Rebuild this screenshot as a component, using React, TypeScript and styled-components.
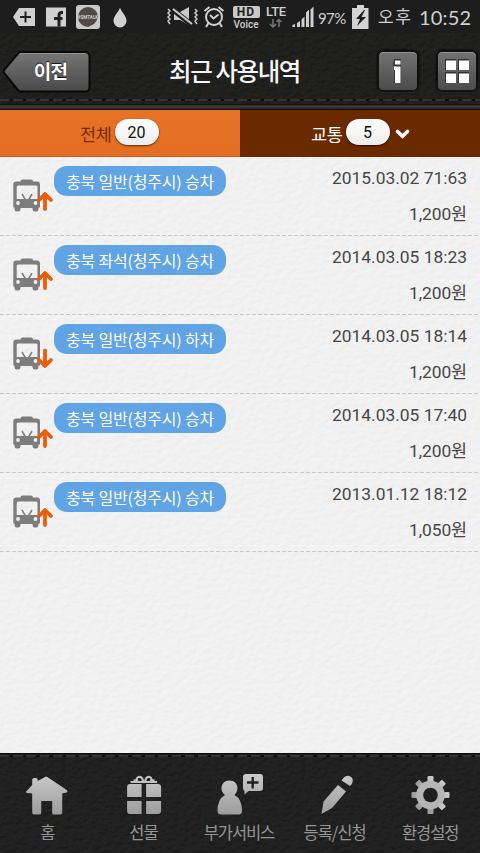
import React from "react";
import styled, { createGlobalStyle } from "styled-components";

const leather = (light: string, freq: string, scale: number, opacity: number) =>
  `url("data:image/svg+xml,${encodeURIComponent(
    `<svg xmlns='http://www.w3.org/2000/svg' width='240' height='240'><filter id='n' x='0' y='0' width='100%' height='100%'><feTurbulence type='fractalNoise' baseFrequency='${freq}' numOctaves='2' seed='4' stitchTiles='stitch'/><feDiffuseLighting lighting-color='${light}' surfaceScale='${scale}' diffuseConstant='1'><feDistantLight azimuth='60' elevation='55'/></feDiffuseLighting></filter><rect width='240' height='240' filter='url(#n)' opacity='${opacity}'/></svg>`
  )}")`;

const darkLeather = leather("#262626", "0.17 0.24", 1.8, 0.6);
const paleLeather = leather("#ffffff", "0.15 0.2", 0.9, 0.2);

const sans = `"Noto Sans CJK KR", sans-serif`;

const Global = createGlobalStyle`
  * { box-sizing: border-box; }
  body { margin: 0; background: #1b1b1b; }
`;

const Screen = styled.div`
  width: 480px;
  height: 853px;
  display: flex;
  flex-direction: column;
  overflow: hidden;
  font-family: Roboto, ${sans};
`;

const StatusBar = styled.div`
  height: 33px;
  flex: none;
  display: flex;
  background: #1d1d1d;
  color: #d0d0d0;
`;

const StatusItem = styled.div<{ $w: number; $gap: number }>`
  width: ${(p) => p.$w}px;
  margin-left: ${(p) => p.$gap}px;
  height: 33px;
  flex: none;
  white-space: nowrap;
  svg { display: block; }
`;

const StatusText = styled.span<{ $size: number; $spacing: number; $top: number }>`
  display: block;
  padding-top: ${(p) => p.$top}px;
  font-family: Lato, ${sans};
  font-size: ${(p) => p.$size}px;
  letter-spacing: ${(p) => p.$spacing}px;
  line-height: 24px;
`;

const Network = styled.div`
  display: flex;
  flex-direction: column;
  align-items: center;
  padding-top: 6px;
`;

const HdBadge = styled.div`
  width: 27px;
  height: 12px;
  background: #c9c9c9;
  border-radius: 2px;
  color: #1d1d1d;
  font: 700 12px/12px Roboto, sans-serif;
  letter-spacing: 1px;
  text-align: center;
`;

const VoiceLabel = styled.div`
  margin-top: 1px;
  font: 500 10px/11px Roboto, sans-serif;
  color: #d0d0d0;
`;

const LteLabel = styled.div`
  font: 500 13px/11px Roboto, sans-serif;
  letter-spacing: -0.3px;
`;

const Header = styled.header`
  height: 77px;
  flex: none;
  display: flex;
  flex-direction: column;
  background: ${darkLeather}, #1b1b1a;
`;

const HeaderRow = styled.div`
  height: 65px;
  padding: 18px 3px 0 3px;
  display: grid;
  grid-template-columns: 88px 1fr 40px 40px;
  column-gap: 19px;
`;

const BackButton = styled.button`
  display: grid;
  width: 88px;
  height: 42px;
  padding: 0;
  border: 0;
  background: none;
  > * { grid-area: 1 / 1; }
`;

const BackLabel = styled.span`
  padding-left: 7px;
  align-self: center;
  color: #fff;
  font: 700 19px/40px ${sans};
  letter-spacing: -0.8px;
  padding-bottom: 2px;
  text-shadow: 0 -1px 1px #111;
`;

const Title = styled.h1`
  margin: 0;
  justify-self: center;
  color: #f5f5f5;
  white-space: nowrap;
  font: 500 24.5px/39px ${sans};
  letter-spacing: -1.4px;
`;

const SquareButton = styled.button`
  width: 40px;
  height: 40px;
  padding: 0;
  border: 1px solid #111;
  border-radius: 5px;
  background: linear-gradient(#737373, #4b4b4b);
  box-shadow: inset 0 1px 0 #929292, 0 0 2px 1px #090909, 0 2px 0 #333;
  svg { display: block; }
`;

const Stitch = styled.div`
  height: 6px;
  background: repeating-linear-gradient(100deg, #333332 0 9px, #0e0e0e 10px 13px) 0 1px / 100% 2px no-repeat;
`;

const Seam = styled.div`
  height: 6px;
  border-top: 1px solid #121211;
  border-bottom: 1px solid #11110f;
  background: linear-gradient(#2b2b2a, #3a3a39, #262625);
`;

const Tabs = styled.nav`
  height: 47px;
  flex: none;
  display: grid;
  grid-template-columns: 1fr 1fr;
`;

const Tab = styled.div<{ $active?: boolean }>`
  display: flex;
  padding: 9px 0 0 ${(p) => (p.$active ? 80 : 71)}px;
  background: ${(p) => (p.$active ? "linear-gradient(#e77326, #e56d22)" : "#6b2900")};
  border-bottom: 1px solid ${(p) => (p.$active ? "#c85f1c" : "#6b2900")};
  color: ${(p) => (p.$active ? "#762c00" : "#fff")};
`;

const TabLabel = styled.span`
  width: 34.500px;
  padding-top: 1px;
  font: 400 17.500px/27px ${sans};
  letter-spacing: -0.4px;
  white-space: nowrap;
`;

const Count = styled.span`
  width: 44px;
  height: 26px;
  border-radius: 13px;
  background: linear-gradient(#fff, #ededed);
  box-shadow: 0 1px 2px rgba(0, 0, 0, 0.65);
  color: #111;
  font: 400 16px/27.500px Roboto, sans-serif;
  text-align: center;
`;

const List = styled.main`
  flex: 1;
  background: ${paleLeather}, #f3f3f3;
`;

const Row = styled.article`
  height: 79.1px;
  display: grid;
  grid-template-columns: 54px 1fr auto;
  background: repeating-linear-gradient(90deg, #c8c8c8 0 4px, transparent 4px 6px) 0 100% / 100% 1px no-repeat;
`;

const BusCell = styled.div`
  padding: 20px 0 0 10px;
  svg { display: block; }
`;

const Place = styled.div`
  justify-self: start;
  width: 172px;
  height: 30px;
  margin-top: 9px;
  border-radius: 13px;
  background: #61a4e5;
  color: #fff;
  font: 400 16px/30px ${sans};
  letter-spacing: -0.2px;
  text-align: center;
  white-space: nowrap;
`;

const Details = styled.div`
  padding: 3px 13px 0 0;
  color: #464646;
  font-size: 17.400px;
  line-height: 36px;
  text-align: right;
  white-space: nowrap;
`;

const DateText = styled.div``;

const Amount = styled.div`
  letter-spacing: -0.1px;
`;

const Footer = styled.footer`
  height: 100px;
  flex: none;
  background: ${darkLeather}, #1d1d1d;
`;

const FooterStitch = styled(Stitch)`
  height: 5px;
  border-top: 1px solid #0c0c0c;
`;

const FooterGrid = styled.div`
  display: grid;
  grid-template-columns: repeat(5, 95.6px);
`;

const FooterItem = styled.div`
  display: flex;
  flex-direction: column;
  align-items: center;
  padding-top: 10px;
  svg { display: block; }
`;

const FooterLabel = styled.span<{ $spacing: number }>`
  color: #969696;
  font: 400 16.500px/24px ${sans};
  letter-spacing: ${(p) => p.$spacing}px;
  white-space: nowrap;
`;

const Bus = ({ down }: { down?: boolean }) => (
  <svg width="44" height="38" viewBox="10 177 44 38">
    <path fill="#7d7d7d" fillRule="evenodd" d="M20.500 181.500q0-2 2-2h8.500q2 0 2 2h4q3 0 3 3v23h-1.500v1.500q0 2.500-2.300 2.500h-1.400q-2.300 0-2.300-2.500v-1h-12v1q0 2.500-2.300 2.500h-1.400q-2.300 0-2.300-2.500v-1.500h-1.200v-23q0-3 3-3zM16.700 187v12h20.800v-12q0-1.500-1.500-1.500H18.200q-1.500 0-1.500 1.500z" />
    <path d="m22 194 3.500 6m6.500-6-3.500 6" stroke="#7d7d7d" strokeWidth="1.500" />
    <circle cx="18" cy="203" r="1.900" fill="#eee" />
    <circle cx="35.500" cy="203" r="1.900" fill="#eee" />
    <path
      d={down ? "M45 192.500v15m-6-5.500 6 6 6-6" : "M45 209v-14.500m-6 5.500 6-6 6 6"}
      fill="none"
      stroke="#ed5b06"
      strokeWidth="3.800"
      strokeLinecap="round"
      strokeLinejoin="round"
    />
  </svg>
);

const rows = [
  { place: "충북 일반(청주시) 승차", date: "2015.03.02 71:63", amount: "1,200원" },
  { place: "충북 좌석(청주시) 승차", date: "2014.03.05 18:23", amount: "1,200원" },
  { place: "충북 일반(청주시) 하차", date: "2014.03.05 18:14", amount: "1,200원", down: true },
  { place: "충북 일반(청주시) 승차", date: "2014.03.05 17:40", amount: "1,200원" },
  { place: "충북 일반(청주시) 승차", date: "2013.01.12 18:12", amount: "1,050원" },
];

const FooterIcon = ({ x, children }: { x: number; children: React.ReactNode }) => (
  <svg width="60" height="52" viewBox={`${x} 768 60 52`} fill="url(#silver)">
    <defs>
      <linearGradient id="silver" gradientUnits="userSpaceOnUse" x1="0" y1="774" x2="0" y2="815">
        <stop stopColor="#cacaca" />
        <stop offset="1" stopColor="#9b9b9b" />
      </linearGradient>
    </defs>
    {children}
  </svg>
);

const footerItems = [
  {
    label: "홈",
    spacing: 0,
    x: 17.8,
    icon: <path d="M32 785v-5q0-2 2-2h1.500q2 0 2 2v1l7.800-4.300q.9-.4 1.800.2L66.500 790q1.500 1.500 0 2.500l-4.500 1v19q0 2-2 2h-6.500q-1.500 0-1.500-1.500V801H41v12q0 1.500-1.500 1.500H34q-2 0-2-2v-19l-5-.5q-2.500-1 0-2.500z" />,
  },
  {
    label: "선물",
    spacing: -1,
    x: 113.4,
    icon: (
      <>
        <path d="M127.500 787q0-3 3-3H142v13h-14.500zM146.500 784H158q3.500 0 3.500 3v10h-15zM127.500 801H142v13h-11.500q-3 0-3-3zM146.500 801h15v10q0 3-3.500 3h-11.500z" />
        <path d="M131 782h26.500M134 780.500l4-.5M155 780.500l-4-.5" fill="none" stroke="#c2c2c2" strokeWidth="2" />
        <path d="M143.500 782c0-4-2.500-5.500-4.500-5s-2.500 3-1 4.500M145.500 782c0-4 2.500-5.500 4.500-5s2.500 3 1 4.500" fill="none" stroke="#c2c2c2" strokeWidth="2.200" />
      </>
    ),
  },
  {
    label: "부가서비스",
    spacing: -1.1,
    x: 209,
    icon: (
      <>
        <path d="M229.500 780.500c5 0 8 3.500 8 8q0 3.500-3 6.500 7.500 4 7.500 16 0 3.500-3.500 3.500h-17q-4 0-4-3.500 0-12 7.500-16-3.500-3-3.500-6.500c0-4.500 3-8 8-8z" />
        <path d="M246 774h14q3 0 3 3v11q0 3-3 3h-11.500l-4 3.500v-3.500q-1.500-.5-1.500-3v-11q0-3 3-3z" />
        <path d="M247 782.500h11.500M252.700 777v11.500" stroke="#1f1f1f" strokeWidth="2.400" />
      </>
    ),
  },
  {
    label: "등록/신청",
    spacing: -1,
    x: 304.5,
    icon: <path d="M321 814l2-12.500L337.500 785l8 6.500-14 16.500zM342.500 778.500c3-4 6-3 8-1.500s2.500 4 .5 7.500l-1.500 1.500-8.500-5.500z" />,
  },
  {
    label: "환경설정",
    spacing: -1.1,
    x: 400.5,
    icon: (
      <>
        {[0, 45, 90, 135].map((a) => (
          <rect key={a} x="428" y="776" width="6" height="38" rx="1" transform={`rotate(${a} 431 795)`} />
        ))}
        <circle cx="431" cy="795" r="10.800" fill="none" stroke="#b5b5b5" strokeWidth="7" />
        <circle cx="431" cy="795" r="7.300" fill="#202020" />
      </>
    ),
  },
];

export default function App() {
  return (
    <Screen>
      <Global />
      <StatusBar>
        <StatusItem $w={22} $gap={13}>
          <svg width="22" height="33" viewBox="13 0 22 33">
            <path fill="#d0d0d0" d="m13 17 6-9h16v18H19z" />
            <path d="M20 17h11M25.500 11.500v11" stroke="#202020" strokeWidth="2" />
          </svg>
        </StatusItem>
        <StatusItem $w={20} $gap={11}>
          <svg width="20" height="33" viewBox="46 0 20 33">
            <path fill="#d0d0d0" d="M46 7.500h20v19H46z" />
            <path d="M63 12.500h-1.500q-2.500 0-2.500 3v11m-5-8h8.500" fill="none" stroke="#202020" strokeWidth="3" />
          </svg>
        </StatusItem>
        <StatusItem $w={24} $gap={10}>
          <svg width="24" height="33" viewBox="76 0 24 33">
            <rect x="76" y="5" width="24" height="24" rx="3" fill="#c9c9c9" />
            <path d="M98 17a10 10 0 1 0-10 10l6-3q3-3 4-7z" fill="#514948" />
            <text x="88" y="18.500" textAnchor="middle" fill="#ccc" fontFamily="Roboto" fontSize="4.600" fontWeight="700">#SMTALK</text>
          </svg>
        </StatusItem>
        <StatusItem $w={14} $gap={13}>
          <svg width="14" height="33" viewBox="113 0 14 33">
            <path fill="#d0d0d0" d="M120 7.500c1.500 5 6.500 8 6.500 13.500a6.500 6.500 0 0 1-13 0c0-5.500 5-8.500 6.500-13.500z" />
          </svg>
        </StatusItem>
        <StatusItem $w={32} $gap={39}>
          <svg width="32" height="33" viewBox="166 0 32 33" fill="none" stroke="#c8c8c8" strokeWidth="1.500">
            <path d="M168 9l2 2-2 2 2 2-2 2 2 2-2 2 2 3M195 9l2 2-2 2 2 2-2 2 2 2-2 2 2 3" />
            <path fill="#c8c8c8" stroke="none" d="M174 12h6l9-5v18l-9-5h-6z" />
            <path d="m172 9 20 16" stroke="#1d1d1d" strokeWidth="5" />
            <path d="m173 9 19 15" strokeWidth="2.200" />
          </svg>
        </StatusItem>
        <StatusItem $w={22} $gap={5}>
          <svg width="22" height="33" viewBox="203 0 22 33" fill="none" stroke="#d0d0d0" strokeWidth="2">
            <circle cx="214" cy="17" r="8" />
            <path d="m210 15 3.500 3.500 5-4M208.500 23l-2.500 4m13.500-4 2.500 4M204.500 11l5-4m14 4-5-4" />
          </svg>
        </StatusItem>
        <StatusItem $w={28} $gap={7}>
          <Network>
            <HdBadge>HD</HdBadge>
            <VoiceLabel>Voice</VoiceLabel>
          </Network>
        </StatusItem>
        <StatusItem $w={24} $gap={4}>
          <Network>
            <LteLabel>LTE</LteLabel>
            <svg width="14" height="12" viewBox="0 0 14 12" fill="none" stroke="#777" strokeWidth="1.500">
              <path d="M4 2v8M1 7l3 3 3-3M10 10V2M7.500 5 10 2.500 12.500 5" />
            </svg>
          </Network>
        </StatusItem>
        <StatusItem $w={22} $gap={4}>
          <svg width="22" height="33" viewBox="293 0 22 33" fill="#cfcfcf">
            <path d="M293.500 27v-2l2.500-1v3zM298 27v-4l3-2v6zM302.500 27v-7.500l3-3V27zM307 27V12.500l3-3V27zM311.500 27V9.500l3-3V27z" />
          </svg>
        </StatusItem>
        <StatusItem $w={30} $gap={4}>
          <StatusText $size={15} $spacing={-0.6} $top={6}>97%</StatusText>
        </StatusItem>
        <StatusItem $w={17} $gap={4}>
          <svg width="17" height="33" viewBox="352 0 17 33">
            <path fill="#d4d4d4" d="M357 5h7v3h4.500v21H352V8h5z" />
            <path fill="#1d1d1d" d="M364 10l-8 9h4l-3 7 9-9h-4.500l3.500-7z" />
          </svg>
        </StatusItem>
        <StatusItem $w={36} $gap={9}>
          <StatusText $size={17} $spacing={1.5} $top={5}>오후</StatusText>
        </StatusItem>
        <StatusItem $w={54} $gap={5}>
          <StatusText $size={20} $spacing={0.2} $top={5}>10:52</StatusText>
        </StatusItem>
      </StatusBar>

      <Header>
        <HeaderRow>
          <BackButton>
            <svg width="88" height="42" viewBox="3 51 88 42">
              <defs>
                <linearGradient id="metal" x1="0" y1="0" x2="0" y2="1">
                  <stop stopColor="#777" />
                  <stop offset="1" stopColor="#494949" />
                </linearGradient>
              </defs>
              <path d="M21 52h64q4.500 0 4.500 4.500V87q0 4.500-4.500 4.500H21q-2 0-3-1.500L4.500 73.500q-1.500-2 0-4L18 53.500q1.500-1.500 3-1.500z" fill="url(#metal)" stroke="#090909" strokeWidth="2" />
              <path d="M20 53.500h65" stroke="#929292" />
            </svg>
            <BackLabel>이전</BackLabel>
          </BackButton>
          <Title>최근 사용내역</Title>
          <SquareButton>
            <svg width="38" height="38" viewBox="0 0 38 38">
              <path fill="#333" d="M15 7h7v24h-7V14h-1z" />
              <path fill="#fff" d="M16 8.500h5.500v4H16zM15 14.500h6.500V31H16V18h-1z" />
            </svg>
          </SquareButton>
          <SquareButton>
            <svg width="38" height="38" viewBox="0 0 38 38">
              <path fill="#333" d="M7 7h11v11H7zM20 7h11v11H20zM7 20h11v11H7zM20 20h11v11H20z" />
              <path fill="#fff" d="M8 8.500h10v9.500H8zM21 8.500h10v9.500H21zM8 21.500h10V31H8zM21 21.500h10V31H21z" />
            </svg>
          </SquareButton>
        </HeaderRow>
        <Stitch />
        <Seam />
      </Header>

      <Tabs>
        <Tab $active>
          <TabLabel>전체</TabLabel>
          <Count>20</Count>
        </Tab>
        <Tab>
          <TabLabel>교통</TabLabel>
          <Count>5</Count>
          <svg width="24" height="30" viewBox="0 0 24 30">
            <path d="m7.500 12.500 5 4.700 5-4.700" fill="none" stroke="#fff" strokeWidth="3.600" strokeLinecap="round" />
          </svg>
        </Tab>
      </Tabs>

      <List>
        {rows.map((r, i) => (
          <Row key={i}>
            <BusCell>
              <Bus down={r.down} />
            </BusCell>
            <Place>{r.place}</Place>
            <Details>
              <DateText>{r.date}</DateText>
              <Amount>{r.amount}</Amount>
            </Details>
          </Row>
        ))}
      </List>

      <Footer>
        <FooterStitch />
        <FooterGrid>
          {footerItems.map((f) => (
            <FooterItem key={f.label}>
              <FooterIcon x={f.x}>{f.icon}</FooterIcon>
              <FooterLabel $spacing={f.spacing}>{f.label}</FooterLabel>
            </FooterItem>
          ))}
        </FooterGrid>
      </Footer>
    </Screen>
  );
}
